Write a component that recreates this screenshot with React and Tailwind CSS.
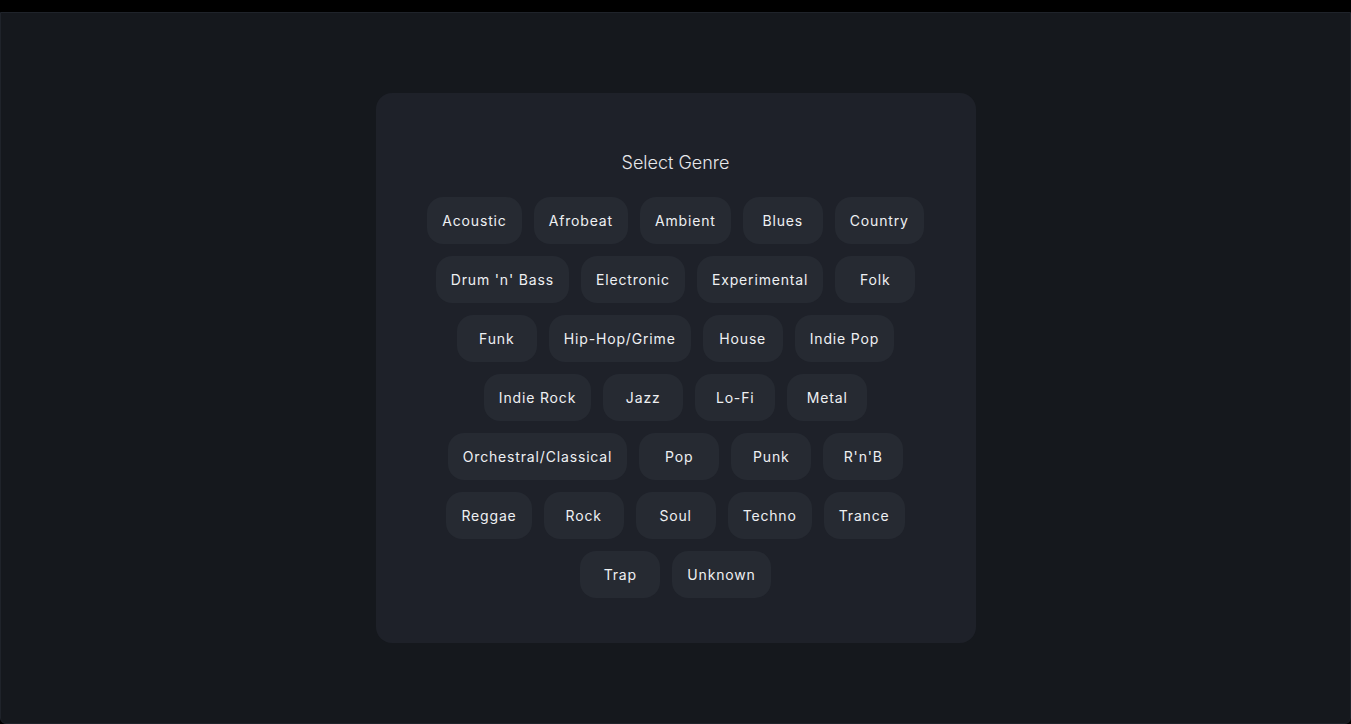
import React from 'react';

const genres = [
  "Acoustic", "Afrobeat", "Ambient", "Blues", "Country",
  "Drum 'n' Bass", "Electronic", "Experimental", "Folk",
  "Funk", "Hip-Hop/Grime", "House", "Indie Pop",
  "Indie Rock", "Jazz", "Lo-Fi", "Metal",
  "Orchestral/Classical", "Pop", "Punk", "R'n'B",
  "Reggae", "Rock", "Soul", "Techno", "Trance",
  "Trap", "Unknown",
];

export default function App() {
  return (
    <div className="h-[724px] w-full bg-black flex flex-col font-['Inter',sans-serif]">
      <div className="h-3 shrink-0 bg-black" />
      <div className="flex-1 flex items-center justify-center bg-[#15181d] border border-[#1f232a] rounded-b-md">
        {/* Genre picker card */}
        <div className="w-[600px] h-[550px] bg-[#1e2129] rounded-2xl px-12 pt-14 pb-[46px] flex flex-col items-center">
          <h2 className="text-lg leading-7 font-light text-[#e6e7ea] mb-5">Select Genre</h2>
          <div className="flex flex-wrap justify-center gap-x-3 gap-y-3">
            {genres.map((g) => (
              <button
                key={g}
                className="h-[47px] min-w-[80px] px-[15px] rounded-2xl bg-[#262a32] text-[14px] tracking-[0.06em] text-[#eef0f2] hover:bg-[#2e333c] transition-colors"
              >
                {g}
              </button>
            ))}
          </div>
        </div>
      </div>
    </div>
  );
}
